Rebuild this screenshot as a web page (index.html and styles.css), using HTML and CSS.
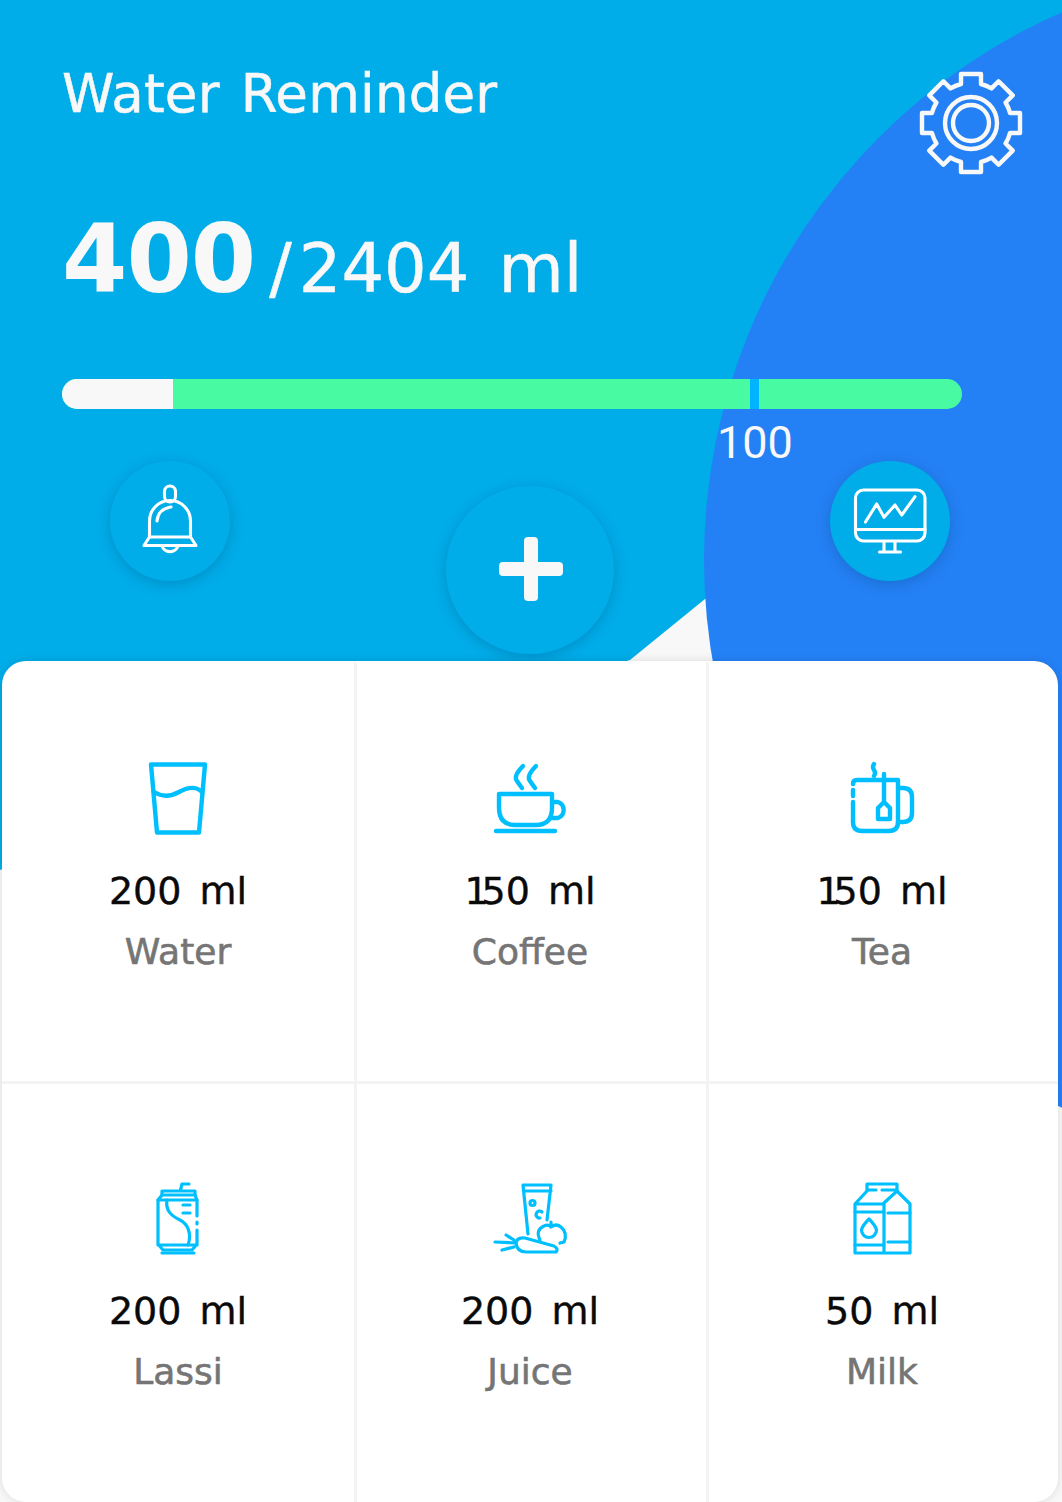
FILE: index.html
```html
<!DOCTYPE html>
<html lang="en">
<head>
  <meta charset="UTF-8" />
  <meta name="viewport" content="width=device-width, initial-scale=1.0"/>
  <title>Water Reminder</title>
  <link rel="stylesheet" href="styles.css">
</head>
<body>
  <div class="screen">
    <svg class="backdrop" width="1062" height="1502" viewBox="0 0 1062 1502">
      <path class="bg-cyan" d="M0 0 H1062 V520 L705 599 L630 660 Q300 760 0 870 Z"/>
      <circle class="bg-blue" cx="1302" cy="560" r="598"/>
    </svg>

    <div class="top">
      <div class="title-row">
        <h1 class="title">Water Reminder</h1>
        <svg class="gear" width="104" height="104" viewBox="-52 -52 104 104">
          <path d="M-10 -39 V-49 H10 V-39 A40 40 0 0 1 20.5 -34.6 L27.6 -41.7 L41.7 -27.6 L34.6 -20.5 A40 40 0 0 1 39 -10 H49 V10 H39 A40 40 0 0 1 34.6 20.5 L41.7 27.6 L27.6 41.7 L20.5 34.6 A40 40 0 0 1 10 39 V49 H-10 V39 A40 40 0 0 1 -20.5 34.6 L-27.6 41.7 L-41.7 27.6 L-34.6 20.5 A40 40 0 0 1 -39 10 H-49 V-10 H-39 A40 40 0 0 1 -34.6 -20.5 L-41.7 -27.6 L-27.6 -41.7 L-20.5 -34.6 A40 40 0 0 1 -10 -39 Z"/>
          <circle r="26"/>
          <circle r="18"/>
        </svg>
      </div>

      <div class="total"><span class="total-now">400</span><span class="total-goal"><span class="total-slash">/</span>2404 ml</span></div>

      <div class="progress">
        <div class="progress-done"></div>
        <div class="progress-mark"></div>
        <div class="progress-label">100</div>
      </div>

      <div class="actions">
        <div class="round-btn">
          <svg class="line-white" width="120" height="120" viewBox="20 21 120 120">
            <rect x="74.500" y="46" width="11" height="16" rx="5.500"/>
            <path d="M59.500 97 V81 A20.500 20.500 0 0 1 100.500 81 V97"/>
            <path d="M59.500 97 H100.500 L106 105.500 H54 Z"/>
            <path d="M72 106 A8.500 8.500 0 0 0 88 106"/>
            <path d="M67 81 Q68 69 81 67"/>
          </svg>
        </div>
        <div class="round-btn round-btn-big">
          <svg class="plus" width="64" height="64" viewBox="0 0 64 64">
            <rect x="25" y="0" width="14" height="64" rx="4"/>
            <rect x="0" y="25" width="64" height="14" rx="4"/>
          </svg>
        </div>
        <div class="round-btn">
          <svg class="line-white" width="120" height="120" viewBox="20 21 120 120">
            <rect x="45.500" y="50" width="69.500" height="51" rx="8"/>
            <path d="M45.500 89.500 H115"/>
            <path d="M74 102 V112 M85 102 V112 M69.500 112 H90.500"/>
            <path d="M55.500 82 L66.700 64 L74 77.300 L85 65 L91.700 75 L105 56.700"/>
          </svg>
        </div>
      </div>
    </div>

    <div class="drinks">
      <div class="drink">
        <svg class="line-blue" width="100" height="100" viewBox="-2 0 100 100">
          <path d="M21 14.500 H75 L69 82.500 H27 Z"/>
          <path d="M24 42 C32 47 40 47 49 42 C58 37 66 36 72 42"/>
        </svg>
        <div class="amount">200 ml</div>
        <div class="name">Water</div>
      </div>
      <div class="drink">
        <svg class="line-blue" width="100" height="100" viewBox="-1 0 100 100">
          <path d="M18 44 H71 V58 Q71 75 55 75 H34 Q18 75 18 58 Z"/>
          <path d="M71 52 H77 A8.500 8.500 0 0 1 77 68 H69"/>
          <path d="M15 81 H74"/>
          <path d="M42 16 Q32 26 36 31 Q38 34 41 38 M55 16 Q45 26 49 31 Q51 34 54 38"/>
        </svg>
        <div class="amount"><span class="one">1</span>50 ml</div>
        <div class="name">Coffee</div>
      </div>
      <div class="drink">
        <svg class="line-blue" width="100" height="100" viewBox="0 0 100 100">
          <path d="M21 34 Q21 30 25 30 H66 V72 Q66 81 57 81 H30 Q21 81 21 72 V52 M21 40 V46"/>
          <path d="M66 38 H71 Q80 38 80 47 V63 Q80 72 71 72 H66"/>
          <path d="M52 24 V52 L46 58 V69 H58 V58 L52 52"/>
          <path d="M42 14 Q40 17 42 20 Q44 23 42 26"/>
        </svg>
        <div class="amount"><span class="one">1</span>50 ml</div>
        <div class="name">Tea</div>
      </div>
      <div class="drink">
        <svg class="line-blue line-thin" width="100" height="100" viewBox="-2 0 100 100">
          <path d="M50.500 20 L52 14 H59"/>
          <path d="M32 21 H65 V25 H32 Z"/>
          <path d="M32 25 L28 30 V74 L33 80 H62 L67 74 V60 M67 54 V52 M67 46 V30 L65 25"/>
          <path d="M32 83 H64"/>
          <path d="M28 30 H67 M28 75 H67"/>
          <path d="M37 30 C35 41 42 46 50 50 C58 54 62 64 58 75"/>
          <path d="M53 35 H60 M53 43 H60"/>
        </svg>
        <div class="amount">200 ml</div>
        <div class="name">Lassi</div>
      </div>
      <div class="drink">
        <svg class="line-blue line-thin" width="100" height="100" viewBox="0 0 100 100">
          <path d="M43 15 H71 L67 50 M43 15 L48 64 M44 21 H71"/>
          <circle cx="52.500" cy="33" r="2.500"/>
          <path d="M62 42 A3.500 3.500 0 1 0 60 48"/>
          <path d="M60 70 Q55 60 64 56 Q68 54 71 57 Q76 53 81 57 Q88 63 84 72 L80 73 M71 57 V52"/>
          <path d="M36 73 Q37 67 45 68 L74 76 Q79 79 76 82 H46 Q37 82 36 73 Z"/>
          <path d="M36 73 L15 72 M34 70 L26 65 M34 77 L22 80"/>
        </svg>
        <div class="amount">200 ml</div>
        <div class="name">Juice</div>
      </div>
      <div class="drink">
        <svg class="line-blue line-thin" width="100" height="100" viewBox="0 0 100 100">
          <path d="M35 21 V14 H65 V21 M35 20 H44 M50 20 H65"/>
          <path d="M35 21 L23 34 V83 H78 V34 L65 21 L52 33 V83 M23 34 H52"/>
          <path d="M23 42 H52 M23 75 H52 M56 43 H78 M56 72 H78"/>
          <path d="M37 49 Q30 56 29.500 60 A7.500 7.500 0 0 0 44.500 60 Q44 56 37 49 Z"/>
        </svg>
        <div class="amount">50 ml</div>
        <div class="name">Milk</div>
      </div>
    </div>
  </div>
</body>
</html>
```

FILE: styles.css
```css
* {
  box-sizing: border-box;
}
body {
  margin: 0;
  background-color: #f8f8f8;
  font-family: "DejaVu Sans", Arial, sans-serif;
}
.screen {
  position: relative;
  width: 1062px;
  height: 1502px;
  overflow: hidden;
}
.backdrop {
  position: absolute;
  top: 0;
  left: 0;
}
.bg-cyan {
  fill: #00ade9;
}
.bg-blue {
  fill: #2481f5;
}

.top {
  position: relative;
  height: 661px;
  padding: 0 39px 0 62px;
  color: #f8f8f8;
}
.title-row {
  display: flex;
  justify-content: space-between;
  height: 185px;
  padding-top: 71px;
}
.title {
  margin: 0;
  font-size: 53px;
  font-weight: 400;
  letter-spacing: 0.2px;
  line-height: 46px;
  word-spacing: 4px;
  -webkit-text-stroke: 0.5px #f8f8f8;
}
.gear {
  fill: none;
  stroke: #f8f8f8;
  stroke-width: 4.4;
  stroke-linejoin: round;
}
.total {
  display: flex;
  align-items: baseline;
  height: 194px;
}
.total-now {
  font-size: 94px;
  font-weight: 700;
  letter-spacing: -1px;
  line-height: 150px;
}
.total-goal {
  margin-left: 14px;
  font-size: 67px;
  word-spacing: 8px;
  -webkit-text-stroke: 0.5px #f8f8f8;
}
.total-slash {
  margin-right: 7px;
}

.progress {
  position: relative;
  width: 900px;
  height: 30px;
  border-radius: 15px;
  background-color: #48fba2;
}
.progress-done {
  width: 111px;
  height: 30px;
  border-radius: 15px 0 0 15px;
  background-color: #f8f8f8;
}
.progress-mark {
  position: absolute;
  top: 0;
  left: 688px;
  width: 9px;
  height: 30px;
  background-color: #00b4ff;
}
.progress-label {
  position: absolute;
  top: 37px;
  left: 655px;
  font-family: Roboto, Arial, sans-serif;
  font-size: 45px;
  line-height: 54px;
}

.actions {
  display: flex;
  justify-content: space-between;
  align-items: flex-start;
  width: 840px;
  margin: 52px 0 0 48px;
}
.round-btn {
  display: flex;
  align-items: center;
  justify-content: center;
  width: 120px;
  height: 120px;
  border-radius: 50%;
  background-color: #00ade9;
  box-shadow: 0 3px 14px rgba(0, 60, 110, 0.28);
}
.round-btn-big {
  width: 168px;
  height: 168px;
  margin-top: 25px;
}
.plus {
  margin: -2px 0 0 1px;
  fill: #f8f8f8;
}
.line-white {
  fill: none;
  stroke: #ffffff;
  stroke-width: 3.1;
  stroke-linecap: round;
  stroke-linejoin: round;
}

.drinks {
  position: relative;
  display: grid;
  grid-template-columns: repeat(3, 352px);
  grid-template-rows: 420px 421px;
  width: 1056px;
  margin-left: 2px;
  border-radius: 24px;
  background-color: #ffffff;
  box-shadow: 0 0 10px rgba(0, 0, 0, 0.12);
  overflow: hidden;
}
.drink {
  display: flex;
  flex-direction: column;
  align-items: center;
  padding: 86px 3px 0 0;
  border-top: 3px solid #f3f3f3;
  border-left: 3px solid #f3f3f3;
}
.drink:nth-child(-n+3) {
  border-top-color: transparent;
}
.drink:nth-child(3n+1) {
  padding-right: 0;
  border-left: 0;
}
.line-blue {
  fill: none;
  stroke: #00bfff;
  stroke-width: 4.4;
  stroke-linecap: round;
  stroke-linejoin: round;
}
.line-thin {
  stroke-width: 3.2;
}
.amount {
  margin-top: 15px;
  color: #0a0a0a;
  font-size: 38px;
  line-height: 52px;
  word-spacing: 6px;
  -webkit-text-stroke: 0.4px #0a0a0a;
}
/* the 1 is much narrower in the original font */
.one {
  letter-spacing: -7px;
}
.name {
  margin-top: 9px;
  color: #757575;
  font-size: 36px;
  line-height: 52px;
  -webkit-text-stroke: 0.6px #757575;
}
```
